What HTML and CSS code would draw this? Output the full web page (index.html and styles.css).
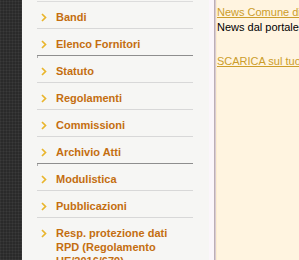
FILE: index.html
```html
<!DOCTYPE html>
<html lang="it">
<head>
<meta charset="utf-8">
<title>Menu</title>
<link rel="stylesheet" href="styles.css">
</head>
<body>
<div class="page">
  <div class="rail"></div>
  <nav class="side">
    <ul class="menu">
      <li class="item"><span class="chev"><svg width="6" height="9" viewBox="0 0 6 9"><polyline points="1,1 4.5,4.5 1,8" /></svg></span><a href="#">Bandi</a></li>
      <li class="item dark"><span class="chev"><svg width="6" height="9" viewBox="0 0 6 9"><polyline points="1,1 4.5,4.5 1,8" /></svg></span><a href="#">Elenco Fornitori</a></li>
      <li class="item"><span class="chev"><svg width="6" height="9" viewBox="0 0 6 9"><polyline points="1,1 4.5,4.5 1,8" /></svg></span><a href="#">Statuto</a></li>
      <li class="item"><span class="chev"><svg width="6" height="9" viewBox="0 0 6 9"><polyline points="1,1 4.5,4.5 1,8" /></svg></span><a href="#">Regolamenti</a></li>
      <li class="item"><span class="chev"><svg width="6" height="9" viewBox="0 0 6 9"><polyline points="1,1 4.5,4.5 1,8" /></svg></span><a href="#">Commissioni</a></li>
      <li class="item dark"><span class="chev"><svg width="6" height="9" viewBox="0 0 6 9"><polyline points="1,1 4.5,4.5 1,8" /></svg></span><a href="#">Archivio Atti</a></li>
      <li class="item"><span class="chev"><svg width="6" height="9" viewBox="0 0 6 9"><polyline points="1,1 4.5,4.5 1,8" /></svg></span><a href="#">Modulistica</a></li>
      <li class="item"><span class="chev"><svg width="6" height="9" viewBox="0 0 6 9"><polyline points="1,1 4.5,4.5 1,8" /></svg></span><a href="#">Pubblicazioni</a></li>
      <li class="item"><span class="chev"><svg width="6" height="9" viewBox="0 0 6 9"><polyline points="1,1 4.5,4.5 1,8" /></svg></span><a href="#">Resp. protezione dati RPD (Regolamento UE/2016/679)</a></li>
    </ul>
  </nav>
  <div class="strip"></div>
  <div class="divider"></div>
  <main class="content">
    <p class="line"><a class="news" href="#">News Comune di Milano</a></p>
    <p class="line">News dal portale del Comune</p>
    <p class="line gap"><a class="news" href="#">SCARICA sul tuo telefono</a></p>
  </main>
</div>
</body>
</html>
```
FILE: styles.css
```css
html, body {
  margin: 0;
  padding: 0;
  height: 100%;
  overflow: hidden;
}
body {
  font-family: "Liberation Sans", Arial, sans-serif;
  font-size: 11px;
  background: #fff4e0;
}
.page {
  display: flex;
  height: 260px;
  width: 299px;
  overflow: hidden;
}
.rail {
  flex: 0 0 22px;
  background-color: #2a2a2a;
  background-image:
    repeating-linear-gradient(0deg, rgba(255,255,255,0.04) 0 1px, transparent 1px 3px),
    repeating-linear-gradient(90deg, rgba(255,255,255,0.04) 0 1px, transparent 1px 3px);
}
.side {
  flex: 0 0 187px;
  background: #f6f6f4;
  padding-left: 15px;
  box-sizing: border-box;
}
.menu {
  list-style: none;
  margin: 1px 0 0 0;
  padding: 0;
  width: 156px;
  border-top: 1px solid #dcdcdc;
}
.item {
  display: flex;
  align-items: flex-start;
  padding: 8px 0 4px 0;
  line-height: 14px;
  border-bottom: 1px solid #d8d8d8;
  position: relative;
}
.item.dark {
  border-bottom-color: #8e8e8e;
}
.item.dark::after {
  content: "";
  position: absolute;
  left: 0;
  bottom: -3px;
  width: 1px;
  height: 2px;
  background: #b0b0b0;
}
.chev {
  flex: 0 0 19px;
  padding-left: 4px;
  box-sizing: border-box;
  height: 14px;
  display: flex;
  align-items: center;
}
.chev svg {
  display: block;
}
.chev polyline {
  fill: none;
  stroke: #e9b52c;
  stroke-width: 1.7;
}
.item a {
  color: #c46e10;
  font-weight: bold;
  text-decoration: none;
}
.strip {
  flex: 0 0 5px;
  background: #fbf6fb;
}
.divider {
  flex: 0 0 2px;
  background: linear-gradient(90deg, #bcaeb6 0 1px, #d9ccd2 1px 2px);
}
.content {
  flex: 1 1 auto;
  min-width: 0;
  background: #fff4e0;
  border-left: 1px solid #fcecd0;
  padding-top: 5px;
  white-space: nowrap;
  overflow: hidden;
}
.line {
  margin: 0;
  line-height: 15px;
  color: #000;
}
.line.gap {
  margin-top: 19px;
}
.news {
  color: #cc9d2a;
  text-decoration: underline;
}
```
